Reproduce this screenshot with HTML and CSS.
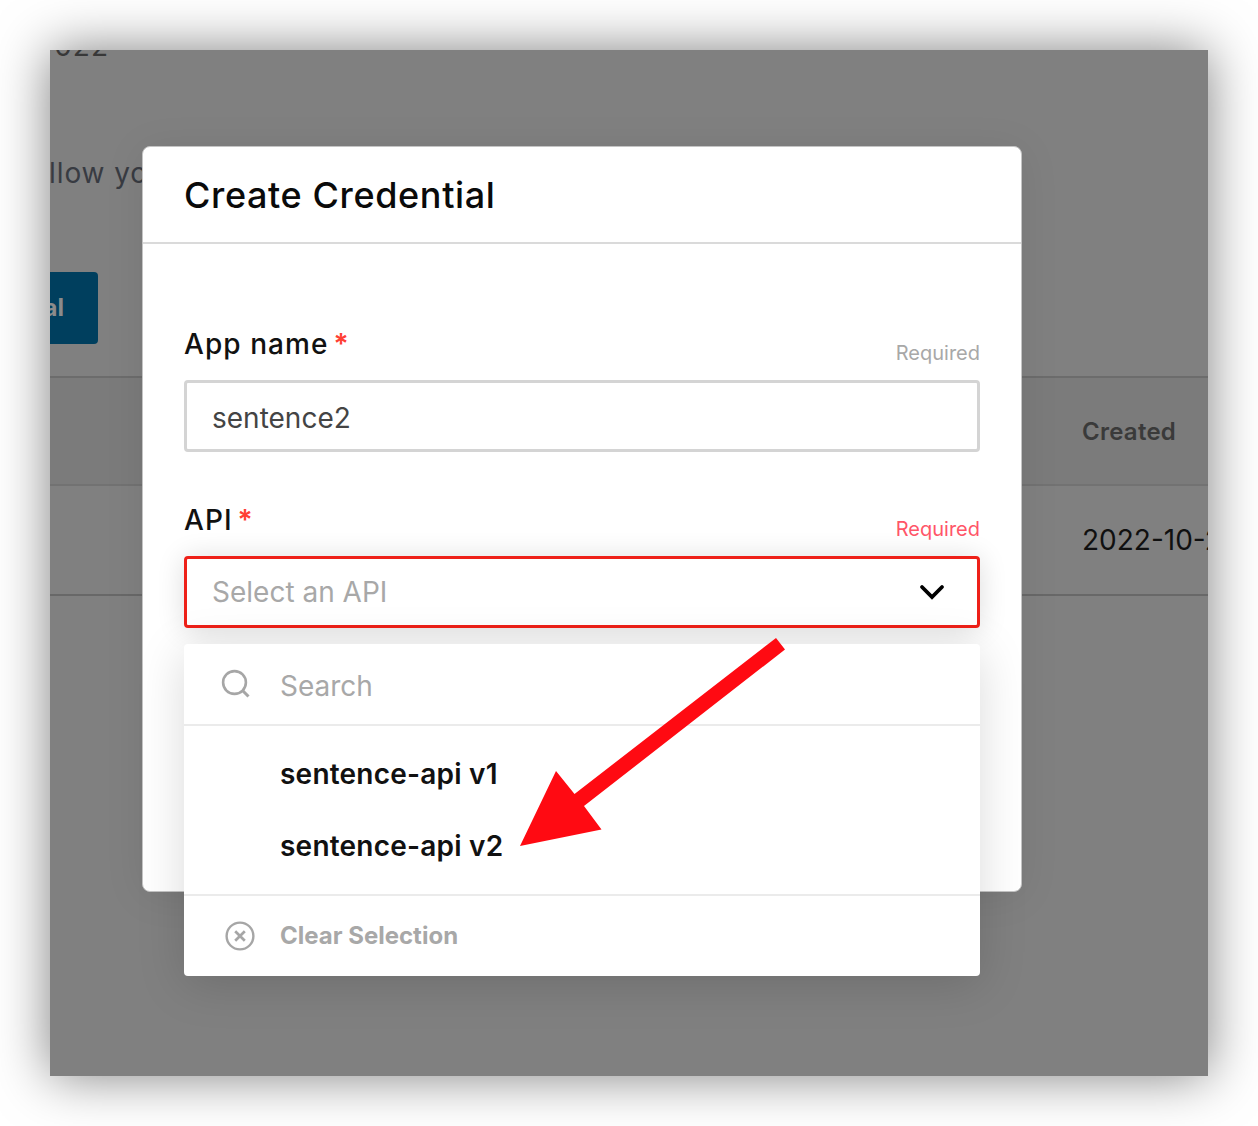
FILE: index.html
```html
<!DOCTYPE html>
<html lang="en">
<head>
<meta charset="utf-8">
<title>Create Credential</title>
<link rel="stylesheet" href="styles.css">
</head>
<body>
<main class="frame">
  <div class="page">
    <div class="page-date"><span>022</span></div>
    <p class="page-intro"><span>llow yo</span></p>
    <div class="page-button"><span>al</span></div>
    <div class="table">
      <div class="row row-head">Created</div>
      <div class="row">2022-10-2</div>
    </div>
  </div>
  <div class="overlay">
    <section class="dialog">
      <header class="dialog-header"><h1>Create Credential</h1></header>
      <div class="dialog-body">
        <div class="field">
          <div class="field-top">
            <span class="label">App name</span><span class="star">*</span>
            <span class="required">Required</span>
          </div>
          <div class="control"><span class="value">sentence2</span></div>
        </div>
        <div class="field">
          <div class="field-top">
            <span class="label">API</span><span class="star">*</span>
            <span class="required required-error">Required</span>
          </div>
          <div class="control control-error">
            <span class="placeholder">Select an API</span>
            <svg class="chevron" viewBox="0 0 26 16"><path d="M3 3l10 10L23 3" fill="none" stroke="#000" stroke-width="3.800" stroke-linecap="round" stroke-linejoin="miter"/></svg>
          </div>
          <div class="menu">
            <div class="menu-search">
              <svg class="icon-search" viewBox="0 0 30 30"><g fill="none" stroke="#a6a6a6" stroke-width="2.6"><circle cx="13.500" cy="13.500" r="11.400"/><path d="M21 21l6.500 6.500" stroke-width="3"/></g></svg>
              <span>Search</span>
            </div>
            <div class="menu-list">
              <div class="option">sentence-api v1</div>
              <div class="option">sentence-api v2</div>
            </div>
            <div class="menu-clear">
              <svg class="icon-clear" viewBox="0 0 30 30"><g fill="none" stroke="#a6a6a6"><circle cx="15" cy="15" r="13.400" stroke-width="2.400"/><path d="M10.200 10.200l9.600 9.600M19.800 10.200l-9.600 9.600" stroke-width="2.700"/></g></svg>
              <span>Clear Selection</span>
            </div>
          </div>
        </div>
      </div>
    </section>
  </div>
  <svg class="arrow" viewBox="0 0 266 210"><path d="M0 208L36 133L54.500 156L256 0L265 11.500L64 168L81.500 191.500Z" fill="#ff0a12"/></svg>
</main>
</body>
</html>
```
FILE: styles.css
```css
* { box-sizing: border-box; }
body {
  margin: 0;
  padding: 50px;
  background: #fff;
  font-family: Inter, "Liberation Sans", sans-serif;
  font-size: 28px;
}
.frame {
  position: relative;
  width: 1158px;
  height: 1026px;
  background: #808080;
  box-shadow: 0 0 50px rgba(0, 0, 0, .5);
}
.page {
  height: 1026px;
  overflow: hidden;
  white-space: nowrap;
}
.page-date, .page-intro, .page-button {
  display: flex;
  justify-content: flex-end;
}
.page-date {
  width: 59px;
  height: 10px;
  align-items: flex-end;
  line-height: 28px;
  color: #383838;
  letter-spacing: 1px;
}
.page-intro {
  width: 98px;
  height: 40px;
  margin: 93px 0 0;
  line-height: 40px;
  color: #383b42;
  letter-spacing: .9px;
}
.page-button {
  width: 48px;
  height: 72px;
  margin-top: 79px;
  padding-right: 34px;
  border-radius: 0 4px 4px 0;
  background: #003f5e;
  color: #8b8b8b;
  font-size: 24px;
  font-weight: 700;
  line-height: 72px;
}
.table {
  margin-top: 32px;
  border-top: 2px solid #6c6c6c;
  border-bottom: 2px solid #686868;
}
.row {
  height: 108px;
  padding-left: 1032px;
  line-height: 108px;
  color: #101010;
}
.row-head {
  border-bottom: 2px solid #727272;
  background: #7b7b7b;
  color: #3a3a3a;
  font-size: 24px;
  font-weight: 600;
  letter-spacing: .25px;
}
.overlay {
  position: absolute;
  inset: 0;
  padding: 96px 92px;
}
.dialog {
  width: 880px;
  height: 746px;
  border: 1px solid #c4c4c4;
  border-radius: 8px;
  background: #fff;
  box-shadow: 0 4px 40px rgba(0, 0, 0, .08);
}
.dialog-header {
  height: 97px;
  padding-left: 41px;
  border-bottom: 2px solid #dadada;
}
h1 {
  margin: 0;
  font-size: 36px;
  font-weight: 550;
  line-height: 96px;
  letter-spacing: .62px;
  color: #0a0a0a;
}
.dialog-body {
  display: flex;
  flex-direction: column;
  gap: 44px;
  padding: 76px 41px 0;
}
.field { position: relative; }
.field-top {
  display: flex;
  height: 60px;
  line-height: 49px;
}
.label {
  font-weight: 550;
  letter-spacing: 1.05px;
  color: #111;
}
.star {
  margin-left: 5px;
  color: #ff4034;
  font-weight: 600;
}
.required {
  margin-left: auto;
  padding-top: 9px;
  font-size: 20px;
  color: #a8a8a8;
}
.required-error { color: #ff5568; }
.control {
  display: flex;
  align-items: center;
  justify-content: space-between;
  height: 72px;
  padding: 3px 32px 0 25px;
  border: 3px solid #d4d4d4;
  border-radius: 4px;
}
.control-error {
  padding-top: 0;
  padding-bottom: 1px;
  border-color: #ee2018;
  box-shadow: 0 2px 28px rgba(0, 0, 0, .14);
}
.value { color: #444; }
.placeholder { color: #a8a8a8; }
.chevron { width: 26px; height: 16px; }
.menu {
  position: absolute;
  top: 148px;
  left: 0;
  width: 796px;
  height: 332px;
  border-radius: 4px;
  background: #fff;
  box-shadow: 0 8px 48px rgba(0, 0, 0, .15);
}
.menu-search, .menu-clear {
  display: flex;
  align-items: center;
  color: #a8a8a8;
}
.menu-search {
  height: 82px;
  padding: 4px 0 0 37px;
  border-bottom: 2px solid #ebebeb;
}
.icon-search { width: 30px; height: 30px; margin: -4px 29px 0 0; }
.menu-list {
  height: 170px;
  padding-top: 12px;
  border-bottom: 2px solid #ebebeb;
}
.option {
  height: 72px;
  padding-left: 96px;
  font-weight: 600;
  line-height: 72px;
  letter-spacing: .22px;
  color: #111;
}
.menu-clear {
  height: 80px;
  padding-left: 41px;
  font-size: 24px;
  font-weight: 700;
}
.menu-clear span { padding-bottom: 2px; }
.icon-clear { width: 30px; height: 30px; margin-right: 25px; }
.arrow {
  position: absolute;
  left: 470px;
  top: 588px;
  width: 266px;
  height: 210px;
}
```
